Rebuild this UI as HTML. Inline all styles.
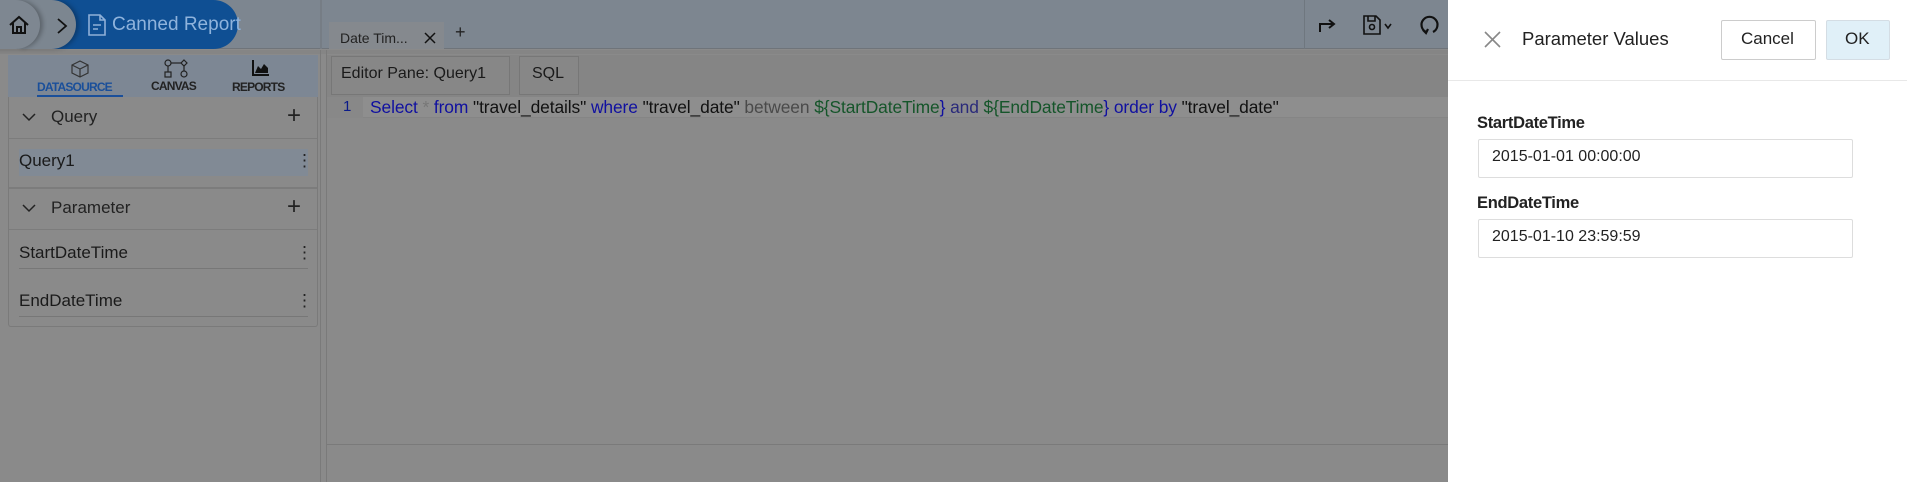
<!DOCTYPE html>
<html><head><meta charset="utf-8"><style>
*{box-sizing:border-box;margin:0;padding:0}
body{width:1907px;height:482px;overflow:hidden;background:#8a8a8a;font-family:"Liberation Sans",sans-serif;position:relative;color:#1a1a1a}
.a{position:absolute}
</style></head><body>
<!-- top bar -->
<div class="a" style="left:0;top:0;width:1448px;height:49px;background:#7d8690;border-bottom:1px solid #6f747a"></div>
<div class="a" style="left:0;top:50px;width:1448px;height:4px;background:#858585"></div>
<!-- blue pill -->
<div class="a" style="left:50px;top:0;width:188px;height:49px;background:#0f4f93;border-radius:0 25px 25px 0"></div>
<div class="a" style="left:18px;top:0;width:58px;height:49px;background:#7c8690;border-radius:0 25px 25px 0;box-shadow:3px 0 4px rgba(0,0,0,.25)"></div>
<div class="a" style="left:-14px;top:0;width:54px;height:49px;background:#7e8791;border-radius:0 25px 25px 0;box-shadow:3px 0 4px rgba(0,0,0,.25)"></div>
<svg class="a" style="left:8px;top:14px" width="22" height="22" viewBox="0 0 22 22" fill="none" stroke="#111" stroke-width="2"><path d="M2 11 L11 3 L20 11 M5 9 V19 H17 V9 M9 19 V13 H13 V19"/></svg>
<svg class="a" style="left:56px;top:17px" width="12" height="18" viewBox="0 0 12 18" fill="none" stroke="#111" stroke-width="1.8"><path d="M2 2 L10 9 L2 16"/></svg>
<svg class="a" style="left:88px;top:14px" width="18" height="22" viewBox="0 0 18 22" fill="none" stroke="#8fb0d8" stroke-width="1.6"><path d="M1 1 H12 L17 6 V21 H1 Z M12 1 V6 H17 M5 11 H13 M5 15 H10"/></svg>
<div class="a" style="left:112px;top:14px;font-size:19px;color:#8fb3dc">Canned Report</div>
<div class="a" style="left:320px;top:0;width:2px;height:49px;background:#767d85"></div>
<!-- tab -->
<div class="a" style="left:329px;top:22px;width:115px;height:27px;background:#85898e"></div>
<div class="a" style="left:340px;top:30px;font-size:14px;color:#222">Date Tim...</div>
<svg class="a" style="left:424px;top:32px" width="12" height="12" viewBox="0 0 12 12" stroke="#111" stroke-width="1.5"><path d="M1 1 L11 11 M11 1 L1 11"/></svg>
<div class="a" style="left:455px;top:22px;font-size:18px;color:#222">+</div>
<div class="a" style="left:1304px;top:0;width:1px;height:49px;background:#6f777f"></div>
<svg class="a" style="left:1318px;top:12px" width="20" height="22" viewBox="0 0 20 22" fill="none" stroke="#111" stroke-width="2"><path d="M2 20 V12 H15 M11 8 L16 12 L11 16" fill="none"/></svg>
<svg class="a" style="left:1362px;top:14px" width="32" height="22" viewBox="0 0 32 22" fill="none" stroke="#111" stroke-width="1.6"><path d="M2 2 H14 L18 6 V20 H2 Z M6 2 V7 H13 V2"/><circle cx="10" cy="13" r="2.5"/><path d="M23 10 L26 14 L29 10"/></svg>
<svg class="a" style="left:1418px;top:12px" width="22" height="24" viewBox="0 0 22 24" fill="none" stroke="#111" stroke-width="2.2"><path d="M8 20 A8 8 0 1 1 15 20"/><path d="M5 18 L8 21 L10 17"/></svg>
<!-- left panel -->
<div class="a" style="left:8px;top:55px;width:310px;height:42px;background:#7d8794"></div>
<svg class="a" style="left:70px;top:60px" width="20" height="18" viewBox="0 0 20 18" fill="none" stroke="#333" stroke-width="1.2"><path d="M2 5 L10 1 L18 5 V13 L10 17 L2 13 Z M2 5 L10 9 L18 5 M10 9 V17"/></svg>
<div class="a" style="left:37px;top:80px;font-size:12px;font-weight:bold;color:#1a4f9a;letter-spacing:-.8px">DATASOURCE</div>
<div class="a" style="left:37px;top:95px;width:86px;height:2px;background:#1a4f9a"></div>
<svg class="a" style="left:162px;top:59px" width="28" height="20" viewBox="0 0 28 20" fill="none" stroke="#222" stroke-width="1.2"><circle cx="6" cy="4" r="3"/><path d="M9 4 H19"/><path d="M22 1 L25 4 L22 7 L19 4 Z"/><rect x="3" y="13" width="6" height="5"/><circle cx="22" cy="15" r="3"/><path d="M6 7 V13 M22 7 V12"/></svg>
<div class="a" style="left:151px;top:79px;font-size:12px;font-weight:bold;color:#222;letter-spacing:-.8px">CANVAS</div>
<svg class="a" style="left:251px;top:60px" width="18" height="17" viewBox="0 0 18 17" fill="#111"><path d="M1 0 V16 H18 V14 H3 V0 Z"/><path d="M4 13 L7 6 L10 9 L13 4 L17 8 V13 Z"/></svg>
<div class="a" style="left:232px;top:80px;font-size:12px;font-weight:bold;color:#222;letter-spacing:-.8px">REPORTS</div>
<div class="a" style="left:8px;top:97px;width:310px;height:230px;border:1px solid #7a7a7a;border-top:none;border-radius:0 0 3px 3px"></div>
<div class="a" style="left:9px;top:138px;width:308px;height:1px;background:#7c7c7c"></div>
<div class="a" style="left:9px;top:187px;width:308px;height:2px;background:#7c7c7c"></div>
<div class="a" style="left:9px;top:229px;width:308px;height:1px;background:#7c7c7c"></div>
<svg class="a" style="left:22px;top:112px" width="14" height="10" viewBox="0 0 14 10" fill="none" stroke="#222" stroke-width="1.5"><path d="M1 2 L7 8 L13 2"/></svg>
<div class="a" style="left:51px;top:107px;font-size:17px;color:#222">Query</div>
<div class="a" style="left:287px;top:102px;font-size:24px;color:#222">+</div>
<div class="a" style="left:19px;top:149px;width:289px;height:27px;background:#818a95"></div>
<div class="a" style="left:19px;top:151px;font-size:17px;color:#1a1a1a">Query1</div>
<div class="a" style="left:296px;top:151px;font-size:17px;color:#222">⋮</div>
<svg class="a" style="left:22px;top:203px" width="14" height="10" viewBox="0 0 14 10" fill="none" stroke="#222" stroke-width="1.5"><path d="M1 2 L7 8 L13 2"/></svg>
<div class="a" style="left:51px;top:198px;font-size:17px;color:#222">Parameter</div>
<div class="a" style="left:287px;top:193px;font-size:24px;color:#222">+</div>
<div class="a" style="left:19px;top:243px;font-size:17px;color:#1a1a1a">StartDateTime</div>
<div class="a" style="left:296px;top:243px;font-size:17px;color:#222">⋮</div>
<div class="a" style="left:19px;top:268px;width:289px;height:1px;background:#777"></div>
<div class="a" style="left:19px;top:291px;font-size:17px;color:#1a1a1a">EndDateTime</div>
<div class="a" style="left:296px;top:291px;font-size:17px;color:#222">⋮</div>
<div class="a" style="left:19px;top:316px;width:289px;height:1px;background:#777"></div>
<!-- dividers -->
<div class="a" style="left:320px;top:50px;width:1px;height:432px;background:#7a7a7a"></div>
<div class="a" style="left:326px;top:50px;width:1px;height:432px;background:#7a7a7a"></div>
<!-- editor -->
<div class="a" style="left:327px;top:55px;width:1121px;height:42px;background:#858585"></div>
<div class="a" style="left:331px;top:56px;width:179px;height:39px;background:#878787;border:1px solid #777"></div>
<div class="a" style="left:341px;top:65px;font-size:16px;color:#1a1a1a">Editor Pane: Query1</div>
<div class="a" style="left:519px;top:56px;width:60px;height:39px;background:#878787;border:1px solid #777"></div>
<div class="a" style="left:532px;top:65px;font-size:16px;color:#1a1a1a">SQL</div>
<div class="a" style="left:327px;top:97px;width:1121px;height:21px;background:#8e8e8e;border-bottom:1px solid #858585"></div>
<div class="a" style="left:327px;top:97px;width:36px;height:21px;background:#888"></div>
<div class="a" style="left:343px;top:98px;font-size:15px;color:#0a1a8a">1</div>
<div class="a" style="left:370px;top:97px;font-size:17.4px;white-space:nowrap;letter-spacing:-.1px"><span style="color:#1010a0">Select</span> <span style="color:#777">*</span> <span style="color:#1010a0">from</span> <span style="color:#111">"travel_details"</span> <span style="color:#1010a0">where</span> <span style="color:#111">"travel_date"</span> <span style="color:#4a4a4a">between</span> <span style="color:#15552a">${StartDateTime</span><span style="color:#1010a0">}</span> <span style="color:#2a2a7a">and</span> <span style="color:#15552a">${EndDateTime</span><span style="color:#1010a0">}</span> <span style="color:#1010a0">order by</span> <span style="color:#111">"travel_date"</span></div>
<div class="a" style="left:327px;top:444px;width:1121px;height:1px;background:#7a7a7a"></div>
<!-- right panel -->
<div class="a" style="left:1448px;top:0;width:459px;height:482px;background:#fff"></div>
<svg class="a" style="left:1484px;top:31px" width="17" height="17" viewBox="0 0 17 17" stroke="#888" stroke-width="1.6"><path d="M1 1 L16 16 M16 1 L1 16"/></svg>
<div class="a" style="left:1522px;top:28px;font-size:18.5px;color:#222">Parameter Values</div>
<div class="a" style="left:1721px;top:20px;width:95px;height:40px;border:1px solid #ccc;border-radius:2px;background:#fff"></div>
<div class="a" style="left:1741px;top:29px;font-size:17px;color:#222">Cancel</div>
<div class="a" style="left:1826px;top:20px;width:64px;height:40px;border:1px solid #d4dde4;border-radius:2px;background:#e0f0f8"></div>
<div class="a" style="left:1845px;top:29px;font-size:17px;color:#222">OK</div>
<div class="a" style="left:1448px;top:80px;width:459px;height:1px;background:#e8e8e8"></div>
<div class="a" style="left:1477px;top:114px;font-size:16.5px;font-weight:bold;color:#222;letter-spacing:-.3px">StartDateTime</div>
<div class="a" style="left:1478px;top:139px;width:375px;height:39px;border:1px solid #ddd;border-radius:2px"></div>
<div class="a" style="left:1492px;top:148px;font-size:16px;color:#222">2015-01-01 00:00:00</div>
<div class="a" style="left:1477px;top:194px;font-size:16.5px;font-weight:bold;color:#222;letter-spacing:-.3px">EndDateTime</div>
<div class="a" style="left:1478px;top:219px;width:375px;height:39px;border:1px solid #ddd;border-radius:2px"></div>
<div class="a" style="left:1492px;top:228px;font-size:16px;color:#222">2015-01-10 23:59:59</div>
</body></html>
